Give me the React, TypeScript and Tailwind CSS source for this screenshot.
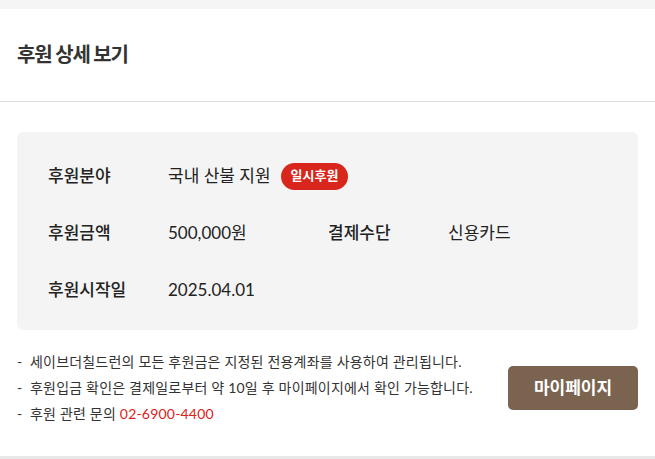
const font = { fontFamily: 'Lato, "Noto Sans CJK KR", sans-serif' };

export default function App() {
  return (
    <div className="w-[655px] h-[459px] bg-white text-[#222] overflow-hidden" style={font}>
      <div className="h-[9px] bg-[#f5f5f5]" />
      <div className="h-[93px] px-[17px] flex items-center border-b border-[#dddddd]">
        <h2 className="text-[20px] font-semibold text-[#333] leading-none tracking-[-1.2px] -mt-[3px]">후원 상세 보기</h2>
      </div>

      <div className="px-[17px] pt-[30px]">
        <div className="bg-[#f4f4f4] rounded-[6px] h-[198px] pl-[31px] pt-[32px] flex flex-col gap-[33px]">
          <div className="flex items-center h-[24px] text-[17px]">
            <span className="w-[120px] font-medium">후원분야</span>
            <span>국내 산불 지원</span>
            <span className="ml-[10px] bg-[#d9261c] text-white text-[13px] font-bold rounded-full px-[10px] h-[27px] flex items-center">일시후원</span>
          </div>
          <div className="flex items-center h-[24px] text-[17px]">
            <span className="w-[120px] font-medium">후원금액</span>
            <span className="w-[160px]">500,000원</span>
            <span className="w-[120px] font-medium">결제수단</span>
            <span>신용카드</span>
          </div>
          <div className="flex items-center h-[24px] text-[17px]">
            <span className="w-[120px] font-medium">후원시작일</span>
            <span>2025.04.01</span>
          </div>
        </div>

        <div className="flex items-center justify-between mt-[22px]">
          <ul className="text-[14px] text-[#333] flex flex-col gap-[6px] leading-[20px] tracking-[0.2px]">
            <li>-&nbsp; 세이브더칠드런의 모든 후원금은 지정된 전용계좌를 사용하여 관리됩니다.</li>
            <li>-&nbsp; 후원입금 확인은 결제일로부터 약 10일 후 마이페이지에서 확인 가능합니다.</li>
            <li>-&nbsp; 후원 관련 문의 <span className="text-[#e0201a]">02-6900-4400</span></li>
          </ul>
          <button className="w-[130px] h-[44px] bg-[#7a634f] text-white text-[17px] font-bold rounded-[5px] mt-[-1px]">마이페이지</button>
        </div>
      </div>
      <div className="mt-[32px] h-[3px] bg-[#e8e8e8]" />
    </div>
  );
}
